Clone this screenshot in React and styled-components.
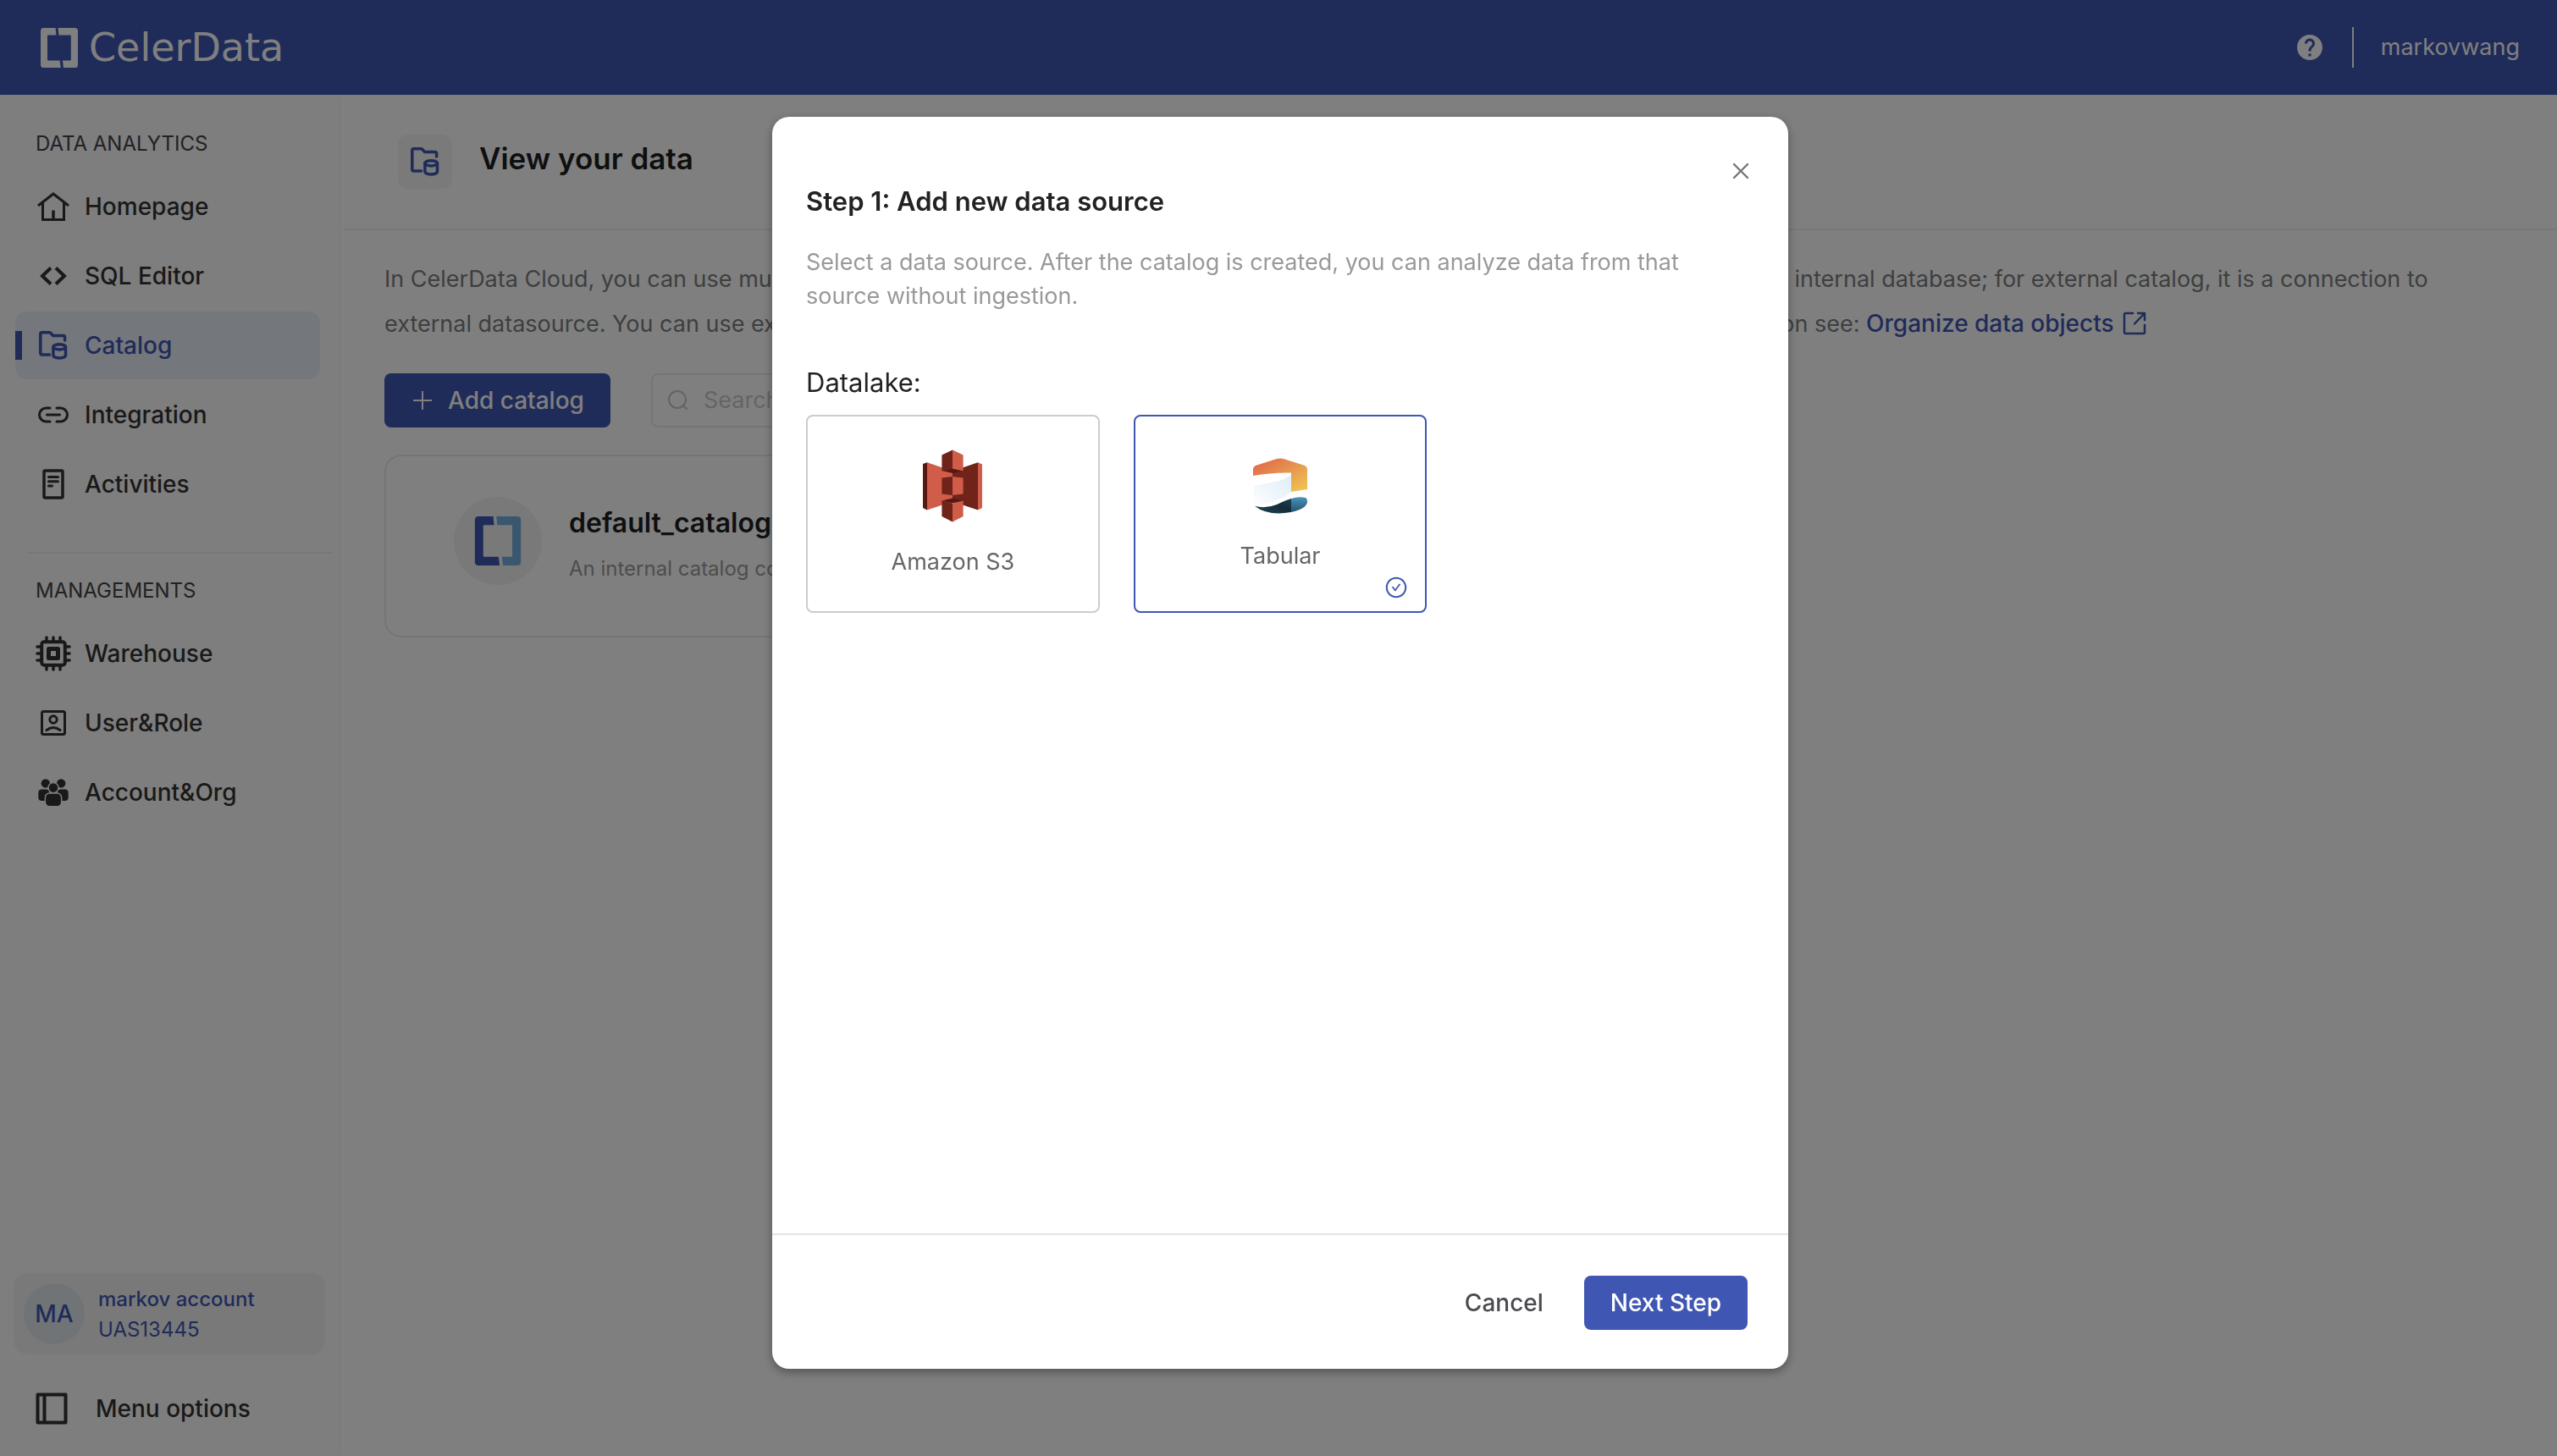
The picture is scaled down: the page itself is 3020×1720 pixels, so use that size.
import React, { useState } from "react";
import styled, { createGlobalStyle } from "styled-components";
import { MdHelp } from "react-icons/md";
import { AiOutlineCheckCircle, AiOutlineClose } from "react-icons/ai";

const BLUE = "#3f57b3";
const INK = "#333333";

const GlobalStyle = createGlobalStyle`
  *, *::before, *::after { box-sizing: border-box; }
  body {
    margin: 0;
    background: #ffffff;
    color: ${INK};
    font-family: Inter, "Liberation Sans", sans-serif;
    font-size: 27px;
    line-height: 40px;
  }
  h1, h2, h3, p, ul, fieldset { margin: 0; padding: 0; border: 0; }
  button, input { font: inherit; }
  a { color: inherit; text-decoration: none; }
  svg { display: block; flex: none; }
`;

const Page = styled.div`
  min-height: 100vh;
  display: flex;
  flex-direction: column;
`;

const TopBar = styled.header`
  display: flex;
  align-items: center;
  justify-content: space-between;
  height: 112px;
  padding: 0 44px 0 48px;
  background: ${BLUE};
  color: #ffffff;
`;

const Brand = styled.a`
  display: flex;
  align-items: center;
  gap: 13px;
  font-family: "DejaVu Sans", sans-serif;
  font-size: 46px;
  line-height: 48px;
`;

const UserArea = styled.div`
  display: flex;
  align-items: center;
`;

const IconButton = styled.button`
  display: flex;
  padding: 0;
  border: 0;
  background: none;
  color: inherit;
`;

const UserName = styled.span`
  display: flex;
  align-items: center;
  height: 48px;
  margin-left: 32px;
  padding-left: 32px;
  border-left: 2px solid #ffffff;
`;

const Body = styled.div`
  flex: 1;
  display: flex;
`;

const Sidebar = styled.aside`
  flex: none;
  width: 400px;
  display: flex;
  flex-direction: column;
  justify-content: space-between;
  padding: 40px 16px 16px;
  background: #fcfcfc;
  box-shadow: 2px 0 4px rgba(0, 0, 0, 0.05);
`;

const SectionDivider = styled.hr`
  height: 2px;
  margin: 40px -8px 26px 16px;
  border: 0;
  background: #eeeeee;
`;

const SectionTitle = styled.h2`
  padding-left: 26px;
  margin-bottom: 16px;
  font-size: 24px;
  font-weight: 400;
  line-height: 36px;
  color: #424448;
`;

const NavList = styled.ul`
  display: flex;
  flex-direction: column;
  gap: 2px;
  padding: 0 6px 0 2px;
  list-style: none;
`;

const NavLink = styled.a`
  display: flex;
  align-items: center;
  gap: 16px;
  height: 80px;
  padding-left: ${(p) => (p.$active ? "0" : "24px")};
  border-radius: 14px;
  font-size: 28px;
  font-weight: 500;
  color: ${(p) => (p.$active ? BLUE : INK)};
  background: ${(p) => (p.$active ? "#e8eef8" : "transparent")};

  &::before {
    content: "";
    display: ${(p) => (p.$active ? "block" : "none")};
    width: 8px;
    height: 34px;
    background: ${BLUE};
  }
`;

const IconSlot = styled.span`
  display: flex;
  justify-content: center;
  width: 42px;
`;

const SidebarFoot = styled.div`
  display: flex;
  flex-direction: column;
  gap: 24px;
`;

const AccountButton = styled.button`
  display: flex;
  align-items: center;
  gap: 16px;
  height: 96px;
  padding: 0 12px;
  border: 0;
  border-radius: 16px;
  background: #f3f3f3;
  color: ${BLUE};
  text-align: left;
`;

const Avatar = styled.span`
  display: grid;
  place-items: center;
  width: 72px;
  height: 72px;
  border-radius: 50%;
  background: #e1e9ef;
  font-size: 28px;
  font-weight: 500;
`;

const AccountText = styled.span`
  display: grid;
  padding-top: 2px;
  font-size: 24px;
  line-height: 36px;
`;

const AccountName = styled.span`
  font-weight: 500;
`;

const MenuButton = styled.button`
  display: flex;
  align-items: center;
  gap: 33px;
  height: 80px;
  padding: 0 26px;
  border: 0;
  background: none;
  color: ${INK};
  font-size: 28px;
  font-weight: 500;
`;

const Main = styled.main`
  flex: 1;
  min-width: 0;
  padding-left: 6px;
`;

const PageHead = styled.div`
  display: flex;
  gap: 32px;
  height: 160px;
  padding: 47px 64px 0;
  border-bottom: 2px solid #f0f0f0;
`;

const HeadIcon = styled.span`
  display: grid;
  place-items: center;
  width: 64px;
  height: 64px;
  border-radius: 12px;
  background: #f5f5f5;
  color: ${BLUE};
`;

const PageTitle = styled.h1`
  font-size: 35px;
  font-weight: 600;
  line-height: 56px;
  color: #1d1f22;
`;

const Content = styled.div`
  padding: 32px 48px;
`;

const Intro = styled.p`
  line-height: 52px;
  white-space: nowrap;
  color: #7b7e80;
`;

const DocLink = styled.a`
  display: inline-flex;
  align-items: center;
  gap: 10px;
  font-size: 28px;
  font-weight: 500;
  color: ${BLUE};
`;

const Toolbar = styled.div`
  display: flex;
  gap: 48px;
  margin: 32px 0;
`;

const PrimaryButton = styled.button`
  display: flex;
  align-items: center;
  gap: 16px;
  height: 64px;
  padding: 0 31px;
  border: 0;
  border-radius: 8px;
  background: ${BLUE};
  color: #ffffff;
  font-size: 28px;
  font-weight: 500;
`;

const SearchBox = styled.label`
  display: flex;
  align-items: center;
  gap: 16px;
  width: 480px;
  height: 64px;
  padding: 0 16px;
  border: 2px solid #eaeaea;
  border-radius: 8px;
  color: #c6c7ca;
`;

const SearchInput = styled.input`
  flex: 1;
  min-width: 0;
  padding: 0;
  border: 0;
  outline: 0;
  background: none;
  &::placeholder { color: #c8cacf; opacity: 1; }
`;

const CatalogGrid = styled.div`
  display: grid;
  grid-template-columns: repeat(3, 1fr);
  gap: 32px;
`;

const CatalogCard = styled.article`
  display: flex;
  align-items: flex-start;
  gap: 32px;
  height: 216px;
  padding: 48px 80px;
  border: 2px solid #eaeaea;
  border-radius: 20px;
`;

const CatalogLogo = styled.span`
  display: grid;
  place-items: center;
  width: 104px;
  height: 104px;
  border-radius: 50%;
  background: #f2f2f2;
`;

const CatalogText = styled.div`
  display: grid;
  gap: 12px;
  padding-top: 7px;
  white-space: nowrap;
`;

const CatalogName = styled.h3`
  font-size: 32px;
  font-weight: 600;
  line-height: 48px;
  color: #1d1f22;
`;

const CatalogNote = styled.p`
  font-size: 24px;
  line-height: 36px;
  color: #9b9b9b;
`;

const Backdrop = styled.div`
  position: fixed;
  inset: 0;
  padding: 8vh 0 0 30.2vw;
  background: rgba(0, 0, 0, 0.5);
`;

const Dialog = styled.section`
  display: flex;
  flex-direction: column;
  width: 1200px;
  max-width: 100%;
  height: 86vh;
  border-radius: 20px;
  background: #ffffff;
  box-shadow: 0 4px 12px rgba(0, 0, 0, 0.35);
`;

const DialogHead = styled.div`
  display: flex;
  justify-content: flex-end;
  height: 76px;
  padding: 50px 42px 0;
  color: #757575;
`;

const DialogBody = styled.div`
  flex: 1;
  padding: 0 40px;
`;

const DialogTitle = styled.h2`
  font-size: 31px;
  font-weight: 600;
  line-height: 48px;
  color: #222222;
`;

const DialogNote = styled.p`
  margin: 28px 0 58px;
  color: #999999;
`;

const Sources = styled.fieldset`
  display: grid;
  grid-template-columns: repeat(3, 1fr);
  gap: 0 40px;
  min-width: 0;
`;

const SourcesTitle = styled.legend`
  padding: 0 0 14px;
  font-size: 31px;
  line-height: 48px;
  color: #222222;
`;

const SourceCard = styled.label`
  position: relative;
  display: flex;
  flex-direction: column;
  align-items: center;
  justify-content: center;
  gap: 26px;
  height: 234px;
  border: 2px solid ${(p) => (p.$selected ? BLUE : "#cccccc")};
  border-radius: 8px;
  color: #666666;
`;

const HiddenRadio = styled.input`
  position: absolute;
  opacity: 0;
`;

const CheckMark = styled.span`
  position: absolute;
  right: 20px;
  bottom: 14px;
  color: ${BLUE};
`;

const DialogFoot = styled.div`
  display: flex;
  justify-content: flex-end;
  gap: 16px;
  padding: 48px 48px 46px;
  border-top: 2px solid #e5e5e5;
`;

const TextButton = styled.button`
  height: 64px;
  padding: 0 32px;
  border: 0;
  background: none;
  color: #4a4b4f;
  font-size: 28px;
  font-weight: 500;
`;

const BracketMark = ({ width, height, left, right }) => (
  <svg width={width} height={height} viewBox="0 0 44 47" aria-hidden="true">
    <path fill={left} d="M3.5 0H17.6L18.4 8.4H9Q8 8.4 8 9.4V37.6Q8 38.6 9 38.6H22.6L23.7 47H3.5Q0 47 0 43.5V3.5Q0 0 3.5 0Z" />
    <path fill={right} d="M20.6 0H40.5Q44 0 44 3.5V43.5Q44 47 40.5 47H27L25.9 38.6H34.8Q35.8 38.6 35.8 37.6V9.4Q35.8 8.4 34.8 8.4H21.5Z" />
  </svg>
);

const Stroke = ({ w, h, sw = 3, children }) => (
  <svg width={w} height={h} viewBox={`0 0 ${w} ${h}`} fill="none" stroke="currentColor" strokeWidth={sw} strokeLinecap="round" strokeLinejoin="round" aria-hidden="true">
    {children}
  </svg>
);

const HomeIcon = () => (
  <Stroke w={38} h={35}>
    <path strokeLinecap="butt" strokeLinejoin="miter" d="M1 16 19 2 37 16M6.5 12.5V32.5H31.5V12.5" />
    <path strokeLinecap="butt" strokeWidth="3.5" d="M19 21.5V32" />
  </Stroke>
);

const CodeIcon = () => (
  <Stroke w={32} h={22} sw={4}>
    <path strokeLinecap="butt" strokeLinejoin="miter" d="M13 1.5 3 11 13 20.5M19 1.5 29 11 19 20.5" />
  </Stroke>
);

const CatalogIcon = () => (
  <Stroke w={34} h={34} sw={3.5}>
    <path d="M12.5 28H3.7Q1.8 28 1.8 26V3.7Q1.8 1.8 3.7 1.8H12.4Q13.2 1.8 13.8 2.4L16.6 5.6H28.8Q30.6 5.6 30.6 7.4V11" />
    <ellipse cx="24.2" cy="18.8" rx="7.3" ry="3.1" />
    <path d="M16.9 19V28.6C16.9 33 31.5 33 31.5 28.6V19" />
  </Stroke>
);

const LinkIcon = () => (
  <Stroke w={36} h={20} sw={3}>
    <path d="M14 2H9.5A8 8 0 0 0 9.5 18H14M22 2H26.5A8 8 0 0 1 26.5 18H22M10.5 10H25.5" />
  </Stroke>
);

const NoteIcon = () => (
  <Stroke w={26} h={36} sw={3}>
    <rect x="2" y="2" width="22" height="32" rx="1.5" strokeWidth="3.5" />
    <path d="M7.5 9.5H18.5M7.5 14.8H18.5M7.5 20H11.5" />
  </Stroke>
);

const ChipIcon = () => (
  <Stroke w={42} h={42} sw={3.5}>
    <rect x="7.2" y="7.2" width="27.6" height="27.6" rx="3" strokeWidth="4" />
    <rect x="15.5" y="15.5" width="11" height="11" strokeWidth="5" />
    <path d="M13 6V2M21 6V2M29 6V2M13 40V36M21 40V36M29 40V36M6 13H2M6 21H2M6 29H2M40 13H36M40 21H36M40 29H36" />
  </Stroke>
);

const UserIcon = () => (
  <Stroke w={30} h={30} sw={3}>
    <rect x="1.5" y="1.5" width="27" height="27" rx="2" />
    <circle cx="15" cy="11" r="4.2" />
    <path d="M7 23.5Q15 17.5 23 23.5" />
  </Stroke>
);

const GroupIcon = () => (
  <svg width="36" height="32" viewBox="0 0 36 32" fill="currentColor" aria-hidden="true">
    <circle cx="8.8" cy="5.4" r="5.2" />
    <circle cx="27.2" cy="5.4" r="5.2" />
    <rect x="0.3" y="12.6" width="13" height="13.4" rx="4" />
    <rect x="22.7" y="12.6" width="13" height="13.4" rx="4" />
    <g stroke="#fcfcfc" strokeWidth="1.4">
      <circle cx="18" cy="10.6" r="6" />
      <rect x="8.4" y="17" width="19.2" height="15.6" rx="5" />
    </g>
  </svg>
);

const PanelIcon = () => (
  <Stroke w={38} h={38} sw={4}>
    <path strokeLinejoin="round" d="M2.5 2.5H35.5V35.5H2.5ZM10.5 2.5V35.5" />
  </Stroke>
);

const ExternalIcon = () => (
  <Stroke w={28} h={28} sw={2.5}>
    <path d="M12 2H3.5Q2 2 2 3.5V24.5Q2 26 3.5 26H24.5Q26 26 26 24.5V16M18 2H26V10M26 2 14 14.5" />
  </Stroke>
);

const PlusIcon = () => (
  <Stroke w={28} h={28} sw={2}>
    <path strokeLinecap="butt" d="M14 3V25M3 14H25" />
  </Stroke>
);

const SearchIcon = () => (
  <Stroke w={28} h={28} sw={2}>
    <circle cx="13" cy="13" r="10" />
    <path d="M20.5 20.500 24 24" />
  </Stroke>
);

const S3Logo = () => (
  <svg width="70" height="88" viewBox="0 -1.5 70 88" aria-hidden="true">
    <path fill="#58180f" d="M0 16.5 5 14.7V71L0 68.5Z" />
    <path fill="#d05c4a" d="M5 14.7 35 25V61L5 71Z" />
    <path fill="#702319" d="M35 25 65 14.7V71L35 61Z" />
    <path fill="#d05c4a" d="M65 14.7 70 17V68.5L65 71Z" />
    <path fill="#58180f" d="M22.4 24.5 35 21.5 47.6 24.5 35 27.5Z" />
    <path fill="#702319" d="M22.4 6 35 0V22L22.4 25Z" />
    <path fill="#d05c4a" d="M35 0 47.6 6V25L35 22Z" />
    <path fill="#702319" d="M22.4 33 35 31.5V53.5L22.4 52Z" />
    <path fill="#d05c4a" d="M35 31.5 47.6 33V52L35 53.5Z" />
    <path fill="#58180f" d="M22.4 60 35 57 47.6 60 35 63Z" />
    <path fill="#702319" d="M22.4 60 35 63V85L22.4 78.5Z" />
    <path fill="#d05c4a" d="M47.6 60 35 63V85L47.6 78.5Z" />
  </svg>
);

const TabularLogo = () => (
  <svg width="64" height="74" viewBox="0 -4 64 74" aria-hidden="true">
    <defs>
      <linearGradient id="tabTop" x1="0" y1="0" x2="1" y2="1">
        <stop offset="0.15" stopColor="#e4704a" />
        <stop offset="0.55" stopColor="#e69a50" />
        <stop offset="0.9" stopColor="#efc050" />
      </linearGradient>
      <linearGradient id="tabMid" x1="1" y1="0" x2="0" y2="1">
        <stop offset="0" stopColor="#deedf5" />
        <stop offset="1" stopColor="#fdfeff" />
      </linearGradient>
      <linearGradient id="tabSea" x1="0" y1="0" x2="0" y2="1">
        <stop offset="0" stopColor="#4a93bb" />
        <stop offset="1" stopColor="#245370" />
      </linearGradient>
      <linearGradient id="tabDeep" x1="0" y1="1" x2="1" y2="0">
        <stop offset="0" stopColor="#1f4656" />
        <stop offset="0.6" stopColor="#132c39" />
        <stop offset="1" stopColor="#1c4256" />
      </linearGradient>
    </defs>
    <path fill="url(#tabTop)" d="M0 21V13Q0 10.5 3 9L28 1Q32 0 36 1L61 9Q64 10.5 64 13V37L45 40V17.5Q22 17 0 21Z" />
    <path fill="url(#tabMid)" d="M45 20V40Q34 50 18 53L1 55V33Q12 31 20 29Q34 28 45 20Z" />
    <path fill="url(#tabDeep)" d="M2 57Q16 60 28 55Q38 50 45 48V64Q18 69 2 57Z" />
    <path fill="url(#tabSea)" d="M45 48Q54 45 62 47Q64 48 64 52Q63 60 45 64Z" />
  </svg>
);

const analytics = [
  { label: "Homepage", icon: HomeIcon },
  { label: "SQL Editor", icon: CodeIcon },
  { label: "Catalog", icon: CatalogIcon, active: true },
  { label: "Integration", icon: LinkIcon },
  { label: "Activities", icon: NoteIcon },
];

const managements = [
  { label: "Warehouse", icon: ChipIcon },
  { label: "User&Role", icon: UserIcon },
  { label: "Account&Org", icon: GroupIcon },
];

const sources = [
  { id: "s3", label: "Amazon S3", logo: S3Logo },
  { id: "tabular", label: "Tabular", logo: TabularLogo },
];

const NavSection = ({ title, items }) => (
  <nav aria-label={title}>
    <SectionTitle>{title}</SectionTitle>
    <NavList>
      {items.map(({ label, icon: Icon, active }) => (
        <li key={label}>
          <NavLink href="#" $active={active} aria-current={active ? "page" : undefined}>
            <IconSlot><Icon /></IconSlot>
            {label}
          </NavLink>
        </li>
      ))}
    </NavList>
  </nav>
);

export default function App() {
  const [source, setSource] = useState("tabular");

  return (
    <Page>
      <GlobalStyle />
      <TopBar>
        <Brand href="#">
          <BracketMark width={44} height={47} left="#ffffff" right="#ffffff" />
          CelerData
        </Brand>
        <UserArea>
          <IconButton type="button" aria-label="Help"><MdHelp size={36} /></IconButton>
          <UserName>markovwang</UserName>
        </UserArea>
      </TopBar>

      <Body>
        <Sidebar>
          <div>
            <NavSection title="DATA ANALYTICS" items={analytics} />
            <SectionDivider />
            <NavSection title="MANAGEMENTS" items={managements} />
          </div>
          <SidebarFoot>
            <AccountButton type="button">
              <Avatar>MA</Avatar>
              <AccountText>
                <AccountName>markov account</AccountName>
                <span>UAS13445</span>
              </AccountText>
            </AccountButton>
            <MenuButton type="button"><PanelIcon />Menu options</MenuButton>
          </SidebarFoot>
        </Sidebar>

        <Main>
          <PageHead>
            <HeadIcon><CatalogIcon /></HeadIcon>
            <PageTitle>View your data</PageTitle>
          </PageHead>
          <Content>
            <Intro>
              In CelerData Cloud, you can use multiple catalogs to organize data from different data sources. For internal catalog, it refers to the internal database; for external catalog, it is a connection to
              <br />
              external datasource. You can use external catalogs to analyze data directly in your data lake without ingestion. For more information see:{" "}
              <DocLink href="#">Organize data objects<ExternalIcon /></DocLink>
            </Intro>
            <Toolbar>
              <PrimaryButton type="button"><PlusIcon />Add catalog</PrimaryButton>
              <SearchBox>
                <SearchIcon />
                <SearchInput type="text" placeholder="Search" aria-label="Search" />
              </SearchBox>
            </Toolbar>
            <CatalogGrid>
              <CatalogCard>
                <CatalogLogo>
                  <BracketMark width={56} height={58} left={BLUE} right="#73aede" />
                </CatalogLogo>
                <CatalogText>
                  <CatalogName>default_catalog</CatalogName>
                  <CatalogNote>An internal catalog contains all</CatalogNote>
                </CatalogText>
              </CatalogCard>
            </CatalogGrid>
          </Content>
        </Main>
      </Body>

      <Backdrop>
        <Dialog role="dialog" aria-modal="true" aria-labelledby="dialog-title">
          <DialogHead>
            <IconButton type="button" aria-label="Close"><AiOutlineClose size={28} /></IconButton>
          </DialogHead>
          <DialogBody>
            <DialogTitle id="dialog-title">Step 1: Add new data source</DialogTitle>
            <DialogNote>
              Select a data source. After the catalog is created, you can analyze data from that
              <br />
              source without ingestion.
            </DialogNote>
            <Sources>
              <SourcesTitle>Datalake:</SourcesTitle>
              {sources.map(({ id, label, logo: Logo }) => (
                <SourceCard key={id} $selected={source === id}>
                  <HiddenRadio type="radio" name="source" value={id} checked={source === id} onChange={() => setSource(id)} />
                  <Logo />
                  <span>{label}</span>
                  {source === id && <CheckMark><AiOutlineCheckCircle size={28} /></CheckMark>}
                </SourceCard>
              ))}
            </Sources>
          </DialogBody>
          <DialogFoot>
            <TextButton type="button">Cancel</TextButton>
            <PrimaryButton type="button">Next Step</PrimaryButton>
          </DialogFoot>
        </Dialog>
      </Backdrop>
    </Page>
  );
}
